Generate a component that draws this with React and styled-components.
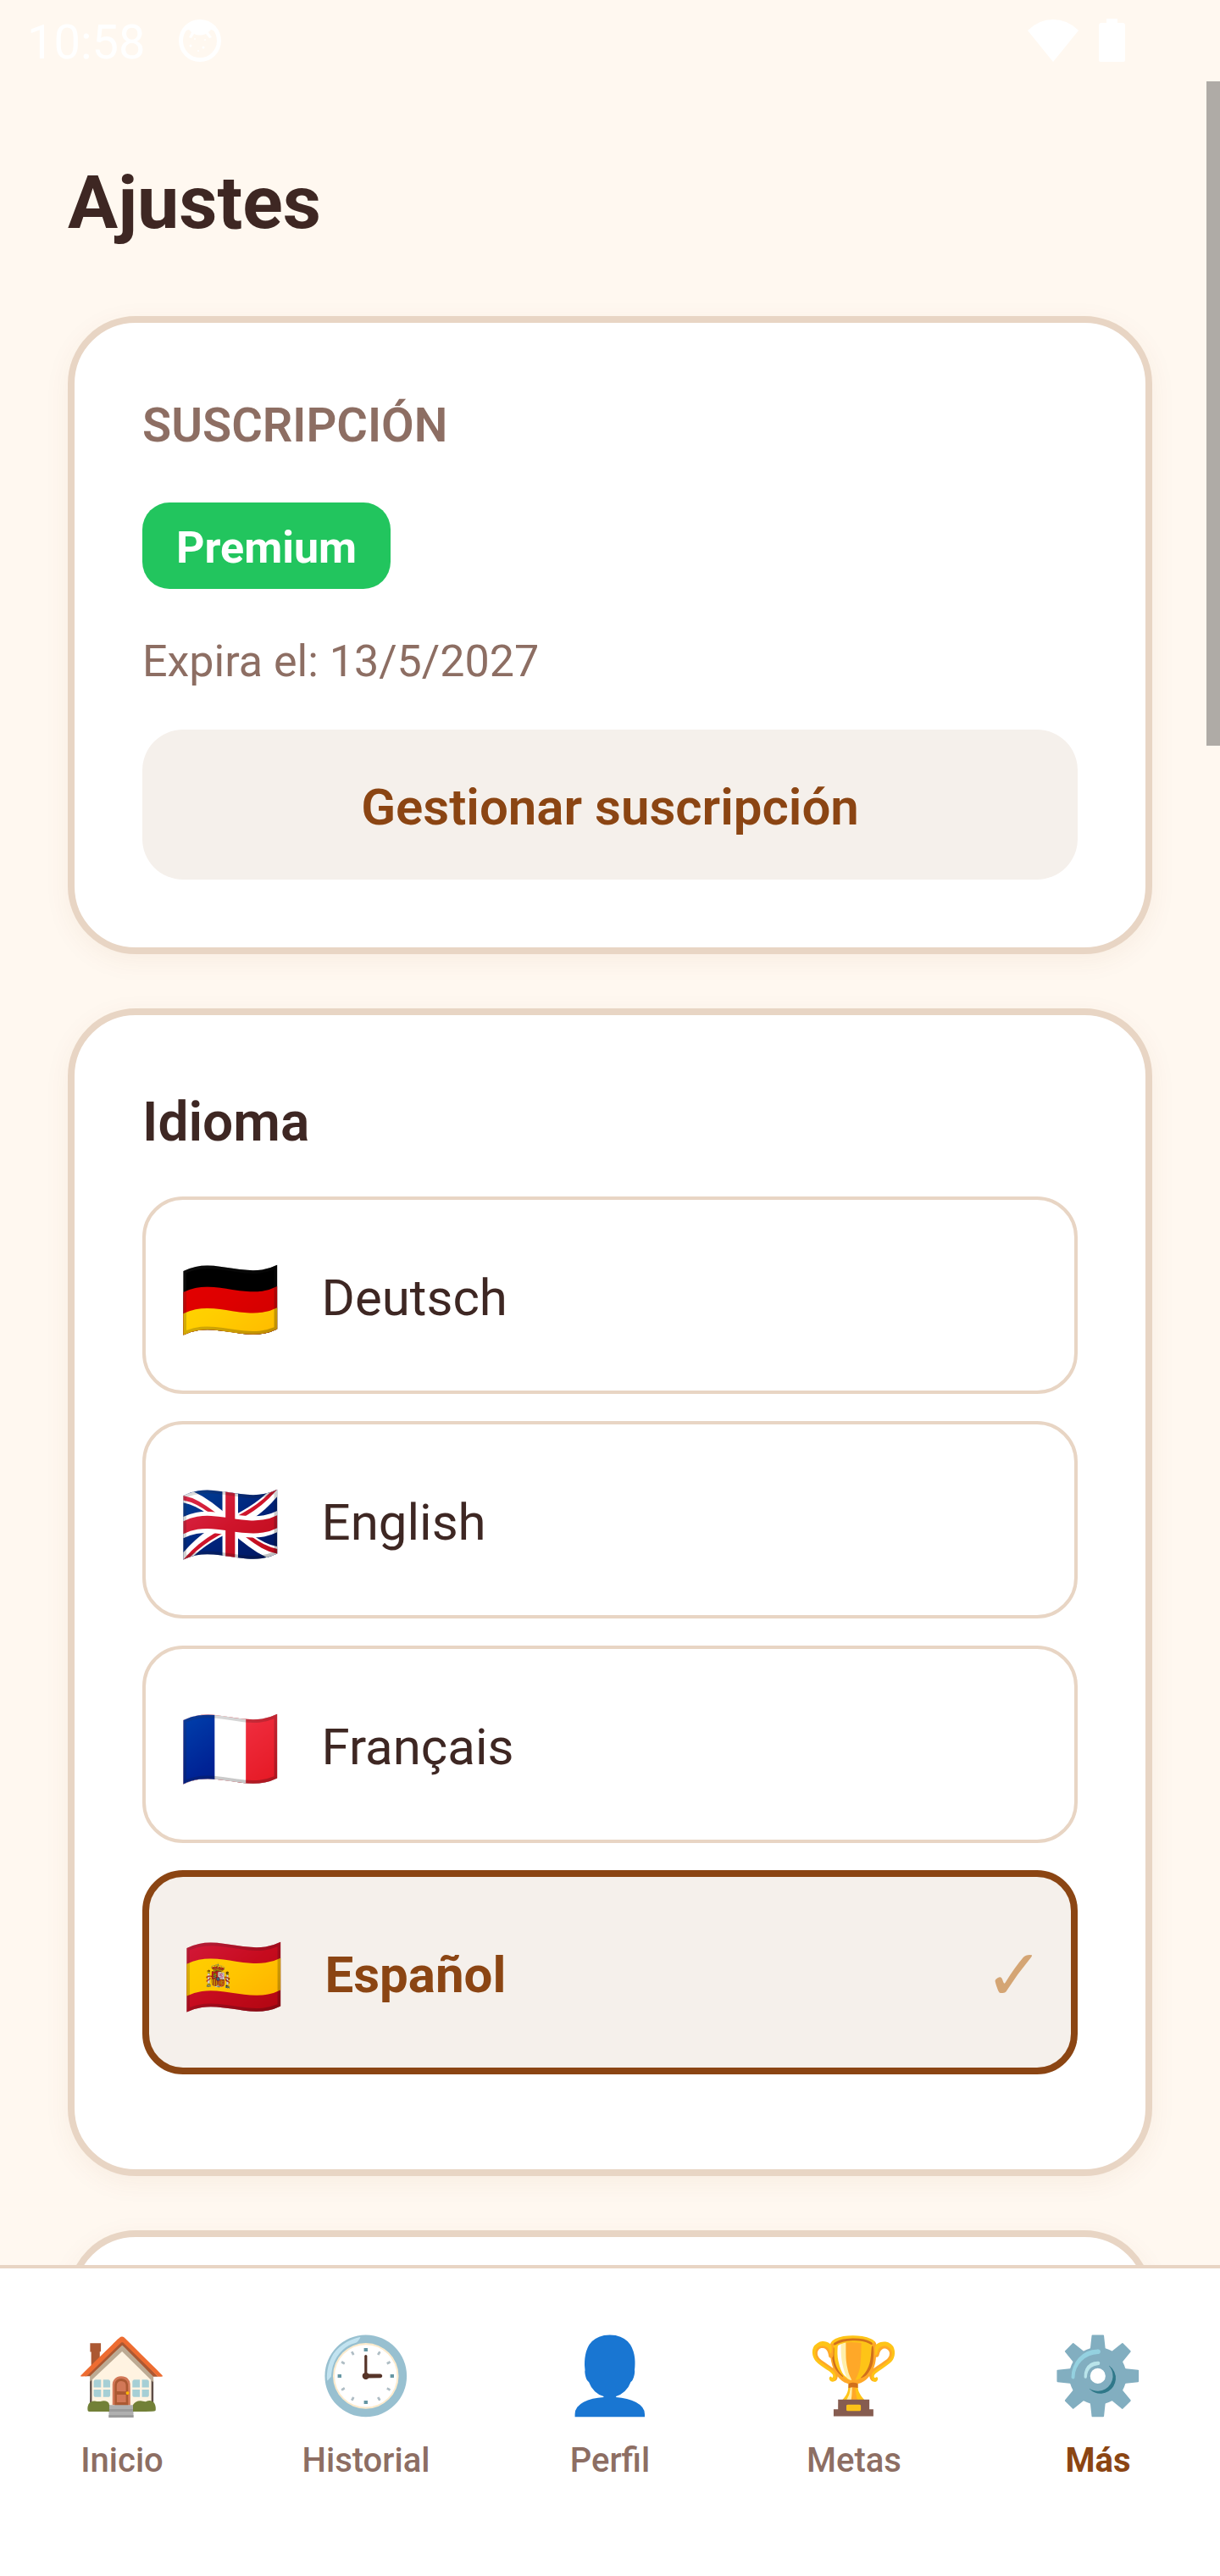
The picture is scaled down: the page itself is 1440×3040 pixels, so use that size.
import { useState } from "react";
import styled, { createGlobalStyle } from "styled-components";

const GlobalStyle = createGlobalStyle`
  * {
    box-sizing: border-box;
  }
  body {
    margin: 0;
    background-color: #fff8f0;
    font-family: Roboto, "Noto Color Emoji", sans-serif;
    color: #3e2723;
  }
  button {
    font-family: inherit;
  }
`;

const Screen = styled.div`
  height: 100vh;
  display: flex;
  flex-direction: column;
  position: relative;
  overflow: hidden;
`;

const StatusBar = styled.header`
  flex: none;
  height: 96px;
  padding: 0 112px 0 32px;
  display: flex;
  align-items: center;
  gap: 40px;
  color: #fff;
`;

const Clock = styled.time`
  padding-top: 4px;
  font-size: 56px;
  line-height: 96px;
`;

const StatusIcons = styled.div`
  margin-left: auto;
  display: flex;
  align-items: center;
  gap: 24px;
`;

const Content = styled.main`
  flex: 1;
  min-height: 0;
  overflow: hidden;
  padding: 80px;
`;

// 스크롤 위치 표시 (콘텐츠 위에 겹쳐짐)
const ScrollThumb = styled.div`
  position: absolute;
  top: 96px;
  right: 0;
  width: 16px;
  height: 784px;
  background-color: #afaba6;
`;

const Title = styled.h1`
  margin: 0 0 71px;
  font-size: 88px;
  line-height: 126px;
  font-weight: 700;
`;

const Card = styled.section`
  margin-bottom: 64px;
  padding: 80px;
  border: 8px solid #e8d5c4;
  border-radius: 80px;
  background-color: #fff;
  box-shadow: 0 8px 32px rgba(139, 69, 19, 0.06);
`;

const EmptyCard = styled(Card)`
  height: 400px;
`;

const SectionLabel = styled.h2`
  margin: 0 0 50px;
  font-size: 56px;
  line-height: 82px;
  font-weight: 600;
  color: #8d6e63;
  text-transform: uppercase;
`;

const Badge = styled.span`
  display: block;
  width: fit-content;
  padding: 19px 40px 13px;
  border-radius: 32px;
  background-color: #22c55e;
  color: #fff;
  font-size: 52px;
  line-height: 70px;
  font-weight: 700;
`;

const Expiry = styled.p`
  margin: 51px 0 45px;
  font-size: 52px;
  line-height: 70px;
  color: #8d6e63;
`;

const ManageButton = styled.button`
  display: block;
  width: 100%;
  padding: 52px 48px 45px;
  border: none;
  border-radius: 48px;
  background-color: #f5f0eb;
  color: #8b4513;
  font-size: 60px;
  line-height: 80px;
  font-weight: 600;
  cursor: pointer;
`;

const CardTitle = styled.h2`
  margin: 0 0 40px;
  font-size: 64px;
  line-height: 94px;
  font-weight: 600;
`;

const LanguageList = styled.div`
  display: flex;
  flex-direction: column;
  gap: 32px;
  padding-bottom: 32px;
`;

const LanguageRow = styled.button`
  display: flex;
  align-items: center;
  gap: 48px;
  width: 100%;
  padding: 56px 32px 56px 40px;
  border: ${(p) => (p.$selected ? "8px solid #8b4513" : "4px solid #e8d5c4")};
  border-radius: 48px;
  background-color: ${(p) => (p.$selected ? "#f5f0eb" : "#fff")};
  color: ${(p) => (p.$selected ? "#8b4513" : "#3e2723")};
  font-weight: ${(p) => (p.$selected ? 700 : 400)};
  text-align: left;
  cursor: pointer;
`;

const Flag = styled.span`
  padding-top: 11px;
  font-size: 96px;
  line-height: 102px;
  font-weight: 400;
`;

const LanguageName = styled.span`
  flex: 1;
  padding-top: 6px;
  font-size: 60px;
  line-height: 80px;
`;

const Check = styled.span`
  padding-top: 8px;
  font-size: 84px;
  line-height: 80px;
  font-weight: 400;
  color: #d4a574;
`;

const TabBar = styled.nav`
  flex: none;
  display: flex;
  padding: 75px 0 109px;
  border-top: 4px solid #e8d5c4;
  background-color: #fff;
`;

const Tab = styled.a`
  flex: 1;
  display: flex;
  flex-direction: column;
  align-items: center;
  gap: 21px;
  color: ${(p) => (p.$active ? "#8b4513" : "#8d6e63")};
  font-weight: ${(p) => (p.$active ? 700 : 500)};
  text-decoration: none;
`;

const TabIcon = styled.span`
  font-size: 88px;
  line-height: 104px;
  font-weight: 400;
`;

const TabLabel = styled.span`
  font-size: 40px;
  line-height: 54px;
`;

const languages = [
  { code: "de", flag: "🇩🇪", name: "Deutsch" },
  { code: "en", flag: "🇬🇧", name: "English" },
  { code: "fr", flag: "🇫🇷", name: "Français" },
  { code: "es", flag: "🇪🇸", name: "Español" },
];

const tabs = [
  { id: "inicio", icon: "🏠", label: "Inicio" },
  { id: "historial", icon: "🕒", label: "Historial" },
  { id: "perfil", icon: "👤", label: "Perfil" },
  { id: "metas", icon: "🏆", label: "Metas" },
  { id: "mas", icon: "⚙️", label: "Más" },
];

const NotificationIcon = () => (
  <svg width="50" height="50" viewBox="0 0 50 50" aria-hidden="true">
    <circle cx="25" cy="25" r="22.5" fill="none" stroke="#fff" strokeWidth="5" />
    <path
      d="M8 13Q14 3 25 3T42 13L38 12L35 15L39 21L36 22L32 17Q25 20 18 17L15 22L12 21L15 15L12 12Z"
      fill="#fff"
    />
    <g fill="#fff">
      <circle cx="14" cy="31" r="1.5" />
      <circle cx="29" cy="33" r="1.5" />
      <circle cx="31" cy="24" r="1" />
      <circle cx="19" cy="23" r="1" />
      <circle cx="23" cy="37" r="1" />
    </g>
  </svg>
);

const WifiIcon = () => (
  <svg width="60" height="50" viewBox="0 0 60 50" aria-hidden="true">
    <path d="M0 13Q13 0 30 0T60 13L30 50Z" fill="#fff" />
  </svg>
);

const BatteryIcon = () => (
  <svg width="31" height="52" viewBox="0 0 31 52" aria-hidden="true">
    <path
      d="M9 0H22V5H28Q31 5 31 8V49Q31 51 29 51H2Q0 51 0 49V8Q0 5 3 5H9Z"
      fill="#fff"
    />
  </svg>
);

export default function App() {
  const [language, setLanguage] = useState("es");
  const [activeTab, setActiveTab] = useState("mas");

  return (
    <>
      <GlobalStyle />
      <Screen>
        <StatusBar>
          <Clock>10:58</Clock>
          <NotificationIcon />
          <StatusIcons>
            <WifiIcon />
            <BatteryIcon />
          </StatusIcons>
        </StatusBar>

        <Content>
          <Title>Ajustes</Title>

          <Card>
            <SectionLabel>Suscripción</SectionLabel>
            <Badge>Premium</Badge>
            <Expiry>Expira el: 13/5/2027</Expiry>
            <ManageButton type="button">Gestionar suscripción</ManageButton>
          </Card>

          <Card>
            <CardTitle>Idioma</CardTitle>
            <LanguageList>
              {languages.map((item) => (
                <LanguageRow
                  key={item.code}
                  type="button"
                  aria-pressed={language === item.code}
                  $selected={language === item.code}
                  onClick={() => setLanguage(item.code)}
                >
                  <Flag>{item.flag}</Flag>
                  <LanguageName>{item.name}</LanguageName>
                  {language === item.code && <Check>✓</Check>}
                </LanguageRow>
              ))}
            </LanguageList>
          </Card>

          <EmptyCard />
        </Content>
        <ScrollThumb />

        <TabBar>
          {tabs.map((tab) => (
            <Tab
              key={tab.id}
              href={`#${tab.id}`}
              $active={activeTab === tab.id}
              onClick={() => setActiveTab(tab.id)}
            >
              <TabIcon>{tab.icon}</TabIcon>
              <TabLabel>{tab.label}</TabLabel>
            </Tab>
          ))}
        </TabBar>
      </Screen>
    </>
  );
}
